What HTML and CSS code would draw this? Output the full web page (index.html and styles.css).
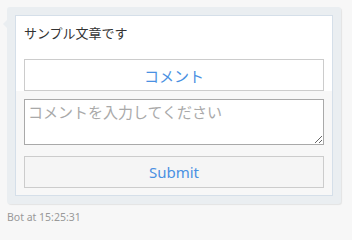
FILE: index.html
```html
<!DOCTYPE html>
<html lang="ja">
<head>
<meta charset="utf-8">
<link rel="stylesheet" href="styles.css">
</head>
<body>
<div class="msg">
  <div class="bubble">
    <div class="card">
      <div class="card-head">
        <p class="text">サンプル文章です</p>
        <button class="btn btn-white" type="button">コメント</button>
      </div>
      <form class="card-form">
        <textarea class="input" placeholder="コメントを入力してください"></textarea>
        <button class="btn btn-gray" type="button">Submit</button>
      </form>
    </div>
  </div>
  <div class="meta">Bot at 15:25:31</div>
</div>
</body>
</html>
```
FILE: styles.css
```css
html, body {
  margin: 0;
  padding: 0;
  background: #f7f7f7;
}
body {
  font-family: "Noto Sans", "Noto Sans CJK JP", sans-serif;
}
.msg {
  padding: 7px 11px 0 7px;
}
.bubble {
  position: relative;
  background: #eaeef1;
  border-radius: 3px;
  padding: 8px;
  box-shadow: 1px 1px 1px rgba(0, 0, 0, 0.08);
}
.bubble::before {
  content: "";
  position: absolute;
  left: -4px;
  top: 13px;
  border-top: 4px solid transparent;
  border-bottom: 4px solid transparent;
  border-right: 4px solid #eaeef1;
}
.card {
  border: 1px solid #d5dfe9;
  background: #f7f7f7;
}
.card-head {
  background: #fff;
  padding: 7px 8px 0;
}
.text {
  margin: 0 0 16px;
  font-family: "Noto Sans CJK JP", sans-serif;
  font-size: 13px;
  line-height: 20px;
  color: #333;
}
.btn {
  display: block;
  width: 100%;
  height: 32px;
  margin: 0;
  padding: 0;
  border: 1px solid #ccc;
  font-family: "Noto Sans", "Noto Sans CJK JP", sans-serif;
  font-size: 15px;
  color: #4a90e2;
  cursor: pointer;
}
.btn-white {
  background: #fff;
}
.btn-gray {
  background: #f5f5f5;
}
.card-form {
  display: flex;
  flex-direction: column;
  gap: 11px;
  padding: 8px 8px 7px;
  margin: 0;
}
.input {
  display: block;
  box-sizing: border-box;
  width: 100%;
  height: 46px;
  margin: 0;
  padding: 2px 3px;
  border: 1px solid #a9a9a9;
  font-family: "Noto Sans CJK JP", sans-serif;
  font-size: 15px;
  line-height: 20px;
  color: #333;
  background: #fff;
}
.input::placeholder {
  color: #a9a9a9;
}
.meta {
  margin-top: 5px;
  font-size: 10.5px;
  line-height: 16px;
  color: #999;
}
```
